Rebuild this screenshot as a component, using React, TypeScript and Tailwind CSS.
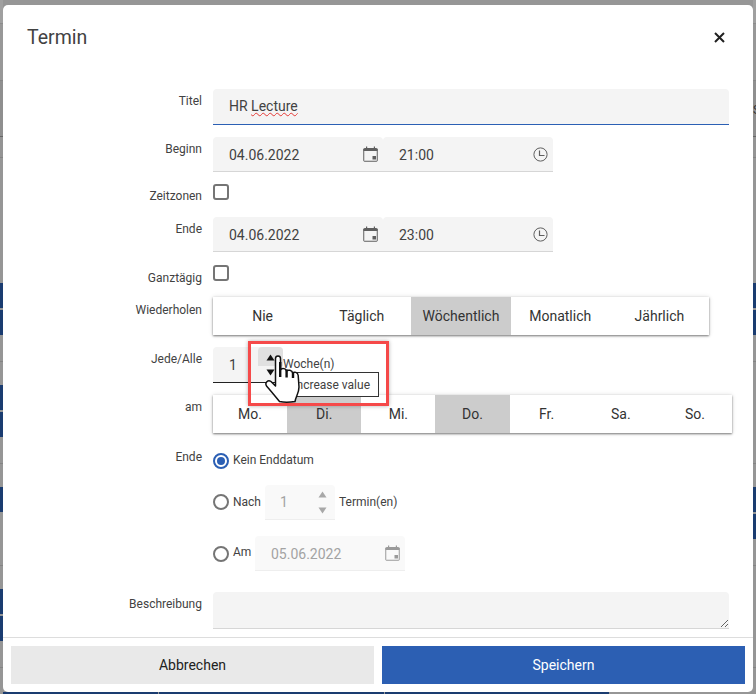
import type { ReactNode } from "react";

const FONT = "font-['Roboto',sans-serif]";

// what shows of the calendar page behind the modal
const leftBands = [
  "h-[23px] bg-[#a0a0a0]",
  "h-px bg-[#8c8c8c]",
  "h-[56px] bg-[#989898]",
  "h-px bg-[#868686]",
  "h-[55px] bg-[#8f8f8f]",
  "h-px bg-[#666666]",
  "h-[20px] bg-[#949494]",
  "h-px bg-[#848484]",
  "h-[125px] bg-[#969696]",
  "h-[25px] bg-[#1a3c70]",
  "h-[2px] bg-[#969696]",
  "h-[25px] bg-[#1a3c70]",
  "h-[26px] bg-[#969696]",
  "h-px bg-[#848484]",
  "h-[23px] bg-[#969696]",
  "h-[25px] bg-[#1a3c70]",
  "h-[2px] bg-[#969696]",
  "h-[25px] bg-[#1a3c70]",
  "h-[26px] bg-[#969696]",
  "h-px bg-[#848484]",
  "h-[23px] bg-[#969696]",
  "h-[25px] bg-[#1a3c70]",
  "h-[53px] bg-[#969696]",
  "h-px bg-[#848484]",
  "h-[23px] bg-[#969696]",
  "h-[25px] bg-[#1a3c70]",
  "h-[2px] bg-[#969696]",
  "h-[25px] bg-[#1a3c70]",
  "h-[26px] bg-[#969696]",
  "h-px bg-[#848484]",
  "h-[26px] bg-[#969696]",
];

const rightBands = [
  "h-[23px] bg-[#a0a0a0]",
  "h-px bg-[#8c8c8c]",
  "h-[56px] bg-[#989898]",
  "h-px bg-[#868686]",
  "h-[55px] bg-[#8f8f8f]",
  "h-px bg-[#666666]",
  "h-[20px] bg-[#949494]",
  "h-px bg-[#848484]",
  "h-[125px] bg-[#969696]",
  "h-[25px] bg-[#1a3c70]",
  "h-[2px] bg-[#969696]",
  "h-[25px] bg-[#1a3c70]",
  "h-[26px] bg-[#969696]",
  "h-px bg-[#848484]",
  "h-[101px] bg-[#969696]",
  "h-px bg-[#848484]",
  "h-[23px] bg-[#969696]",
  "h-[25px] bg-[#1a3c70]",
  "h-[2px] bg-[#969696]",
  "h-[25px] bg-[#1a3c70]",
  "h-[26px] bg-[#969696]",
  "h-px bg-[#848484]",
  "h-[101px] bg-[#969696]",
  "h-px bg-[#848484]",
  "h-[26px] bg-[#969696]",
];

function CalendarIcon({ className }: { className: string }) {
  return (
    <svg viewBox="0 0 15 16" className={className} fill="none" stroke="currentColor">
      <rect x="0.75" y="2.5" width="13.5" height="12.75" rx="0.5" strokeWidth="1" />
      <rect x="0.5" y="3" width="14" height="2" fill="currentColor" stroke="none" />
      <rect x="3" y="0.5" width="1.2" height="2.5" fill="currentColor" stroke="none" />
      <rect x="10.8" y="0.5" width="1.2" height="2.5" fill="currentColor" stroke="none" />
      <rect x="9.5" y="10" width="3.5" height="3.5" fill="currentColor" stroke="none" />
    </svg>
  );
}

function ClockIcon() {
  return (
    <svg viewBox="0 0 15 15" className="w-[15px] h-[15px] text-[#5f5f5f]" fill="none" stroke="currentColor">
      <circle cx="7.5" cy="7.5" r="6.6" strokeWidth="1" />
      <path d="M6.5 3.5V8.5H11.5" strokeWidth="1.2" />
    </svg>
  );
}

function Arrow({ down, className }: { down?: boolean; className: string }) {
  return (
    <svg viewBox="0 0 9 7" className={`w-[9px] h-[7px] ${className}`} fill="currentColor">
      <path d={down ? "M0.5 0.5H8.5L4.5 6.5Z" : "M4.5 0.5L8.5 6.5H0.5Z"} />
    </svg>
  );
}

function HandCursor() {
  return (
    <svg viewBox="0 0 36 50" className="w-[36px] h-[50px]">
      <path
        d="M10.5 4.5C10.5 1 15.5 1 15.5 4.5L15.5 16C16.5 14 21 14 21.5 17C23 15.5 27 16 27.8 19C29 17.5 33 18 33.2 21.5L34 33C34 39 31 42 30 47.5C24 48.5 19 48.5 14.5 47.5C10 42 5.5 36.5 1.5 32C-0.5 28.5 3 25.5 6 27.5L10.5 32Z"
        fill="#ffffff"
        stroke="#111111"
        strokeWidth="1.5"
        strokeLinejoin="round"
      />
      <path d="M15.2 8V23M21.6 15.5V23.5M28 18V24" stroke="#111111" strokeWidth="2.4" fill="none" />
    </svg>
  );
}

function Label({ children, className = "pt-[5px] leading-[14px]" }: { children: ReactNode; className?: string }) {
  return (
    <div className={`w-[199px] shrink-0 mr-[11px] text-right text-xs text-[#424242] ${className}`}>
      {children}
    </div>
  );
}

function PickerField({ value, icon, width = "w-[170px]", muted }: { value: string; icon: ReactNode; width?: string; muted?: boolean }) {
  return (
    <div
      className={`${width} h-[35px] flex items-center justify-between rounded-t-[4px] border-b pl-[16px] text-sm ${
        muted
          ? "bg-[#f9f9f9] border-[#eeeeee] text-[#a3a3a3] pr-[5px]"
          : "bg-[#f4f4f4] border-[#d6d6d6] text-[#424242] pr-[5px]"
      }`}
    >
      <span className="mt-[1px]">{value}</span>
      {icon}
    </div>
  );
}

function Checkbox() {
  return <div className="w-[16px] h-[16px] rounded-[3px] border-2 border-[#757575] bg-white" />;
}

function Radio({ checked }: { checked?: boolean }) {
  return (
    <div
      className={`w-[16px] h-[16px] shrink-0 rounded-full border-2 flex items-center justify-center ${
        checked ? "border-[#2b5fb4]" : "border-[#757575]"
      }`}
    >
      {checked && <div className="w-[8px] h-[8px] rounded-full bg-[#2b5fb4]" />}
    </div>
  );
}

function ButtonGroup({ items, active, className }: { items: string[]; active: string[]; className: string }) {
  return (
    <div className={`h-[38px] flex bg-white shadow-[0_1px_2px_rgba(0,0,0,0.5),0_0_5px_rgba(0,0,0,0.12)] ${className}`}>
      {items.map((item) => (
        <div
          key={item}
          className={`flex-1 flex items-center justify-center text-sm text-[#333333] ${
            active.includes(item) ? "bg-[#cccccc]" : ""
          }`}
        >
          {item}
        </div>
      ))}
    </div>
  );
}

function DateTimeRow({ time }: { time: string }) {
  return (
    <div className="flex">
      <PickerField value="04.06.2022" icon={<CalendarIcon className="w-[15px] h-[16px] text-[#5f5f5f]" />} />
      <PickerField value={time} icon={<ClockIcon />} />
    </div>
  );
}

export default function App() {
  return (
    <div className={`relative w-[756px] h-[694px] overflow-hidden flex bg-[#969696] ${FONT}`}>
      <div className="w-[3px] shrink-0 flex flex-col">
        {leftBands.map((band, i) => (
          <div key={i} className={`shrink-0 ${band}`} />
        ))}
      </div>
      <div className="flex-1 flex flex-col justify-end">
        <div className="flex gap-px">
          <div className="w-[155px] h-[2px] bg-[#1a3c70]" />
          <div className="w-[225px] h-[2px] bg-[#1a3c70]" />
          <div className="w-[224px] h-[2px] bg-[#1a3c70]" />
        </div>
      </div>
      <div className="w-[3px] shrink-0 flex flex-col">
        {rightBands.map((band, i) => (
          <div key={i} className={`shrink-0 ${band}`} />
        ))}
      </div>
      <div className="absolute right-0 top-[105px] w-[3px] h-[10px] overflow-hidden text-xs leading-[10px] text-[#333333]">
        S
      </div>

      {/* modal */}
      <div className="absolute left-[3px] top-[5px] w-[750px] h-[687px] flex flex-col rounded-[5px] bg-white">
        <div className="h-[84px] shrink-0 flex items-start justify-between pl-[24px] pr-[28px] pt-[21px]">
          <h1 className="text-[19.5px] leading-[24px] font-normal text-[#424242]">Termin</h1>
          <svg viewBox="0 0 11 11" className="w-[11px] h-[11px] mt-[6px]" stroke="#212121" strokeWidth="2">
            <path d="M1 1L10 10M10 1L1 10" />
          </svg>
        </div>

        <div className="flex-1 min-h-0 overflow-hidden">
          <div className="flex h-[48px]">
            <Label>Titel</Label>
            <div className="w-[516px] h-[36px] rounded-t-[4px] bg-[#f4f4f4] border-b border-[#2b5fb4] pl-[16px] pt-[7px] text-sm leading-[20px] text-[#424242]">
              HR{" "}
              <span className="underline decoration-wavy decoration-[#e53935] decoration-1 underline-offset-[1px]">
                Lecture
              </span>
            </div>
          </div>
          <div className="flex h-[47px]">
            <Label>Beginn</Label>
            <DateTimeRow time="21:00" />
          </div>
          <div className="flex h-[33px]">
            <Label>Zeitzonen</Label>
            <Checkbox />
          </div>
          <div className="flex h-[48px]">
            <Label>Ende</Label>
            <DateTimeRow time="23:00" />
          </div>
          <div className="flex h-[32px]">
            <Label className="pt-[6px] leading-[14px]">Ganztägig</Label>
            <Checkbox />
          </div>
          <div className="flex h-[50px]">
            <Label className="pt-[6px] leading-[14px]">Wiederholen</Label>
            <ButtonGroup
              className="w-[496px]"
              items={["Nie", "Täglich", "Wöchentlich", "Monatlich", "Jährlich"]}
              active={["Wöchentlich"]}
            />
          </div>
          <div className="flex h-[48px]">
            <Label>Jede/Alle</Label>
            <div className="relative flex items-start">
              <div className="w-[70px] h-[36px] flex rounded-t-[4px] bg-[#f4f4f4] border-b border-[#222222]">
                <div className="w-[45px] pl-[16px] pt-[8px] text-sm leading-[20px] text-[#424242]">1</div>
                <div className="w-[25px] flex flex-col">
                  <div className="h-[19px] rounded-t-[4px] bg-[#e0e0e0] flex items-center justify-center">
                    <Arrow className="text-[#111111] mt-[1px]" />
                  </div>
                  <div className="h-[12px] flex items-center justify-center">
                    <Arrow down className="text-[#111111]" />
                  </div>
                </div>
              </div>
              <span className="text-xs leading-[14px] text-[#424242] mt-[10px]">Woche(n)</span>

              {/* tooltip, annotation and pointer sit over the form */}
              <div className="absolute left-[67px] top-[25px] w-[99px] h-[25px] flex items-center justify-end bg-white border border-[#333333] pr-[8px] text-xs text-[#424242]">
                Increase value
              </div>
              <div className="absolute left-[35px] top-[-6px] w-[141px] h-[65px] border-[3px] border-[#f54949] shadow-[0_0_4px_rgba(0,0,0,0.3)]" />
              <div className="absolute left-[52px] top-[7px]">
                <HandCursor />
              </div>
            </div>
          </div>
          <div className="flex h-[58px]">
            <Label>am</Label>
            <ButtonGroup
              className="w-[519px]"
              items={["Mo.", "Di.", "Mi.", "Do.", "Fr.", "Sa.", "So."]}
              active={["Di.", "Do."]}
            />
          </div>
          <div className="flex h-[139px]">
            <Label className="leading-[8px]">Ende</Label>
            <div className="flex flex-col text-xs text-[#424242]">
              <div className="h-[32px] flex items-start">
                <Radio checked />
                <span className="ml-[4px] leading-[14px]">Kein Enddatum</span>
              </div>
              <div className="h-[51px] flex items-start">
                <div className="mt-[9px]">
                  <Radio />
                </div>
                <span className="ml-[4px] mt-[10px] leading-[14px] w-[32px]">Nach</span>
                <div className="w-[70px] h-[35px] flex items-center rounded-t-[4px] bg-[#f9f9f9] border-b border-[#eeeeee] pl-[15px] text-sm text-[#a3a3a3]">
                  <span className="flex-1">1</span>
                  <div className="w-[26px] flex flex-col items-center gap-[9px]">
                    <Arrow className="text-[#a8a8a8]" />
                    <Arrow down className="text-[#a8a8a8]" />
                  </div>
                </div>
                <span className="ml-[4px] mt-[10px] leading-[14px]">Termin(en)</span>
              </div>
              <div className="flex items-start">
                <div className="mt-[10px]">
                  <Radio />
                </div>
                <span className="ml-[4px] mt-[9px] leading-[14px] w-[22px]">Am</span>
                <PickerField
                  muted
                  width="w-[150px]"
                  value="05.06.2022"
                  icon={<CalendarIcon className="w-[15px] h-[16px] text-[#9a9a9a]" />}
                />
              </div>
            </div>
          </div>
          <div className="flex">
            <Label>Beschreibung</Label>
            <textarea
              readOnly
              className="block w-[516px] h-[37px] resize rounded-t-[4px] bg-[#f4f4f4] border-b border-[#d6d6d6] outline-none"
            />
          </div>
        </div>

        <div className="h-[55px] shrink-0 flex gap-[8px] border-t border-[#dddddd] px-[8px] pt-[8px]">
          <div className="flex-1 h-[38px] flex items-center justify-center bg-[#e9e9e9] text-sm text-[#212121]">
            Abbrechen
          </div>
          <div className="flex-1 h-[38px] flex items-center justify-center bg-[#2c5fb3] text-sm text-white">
            Speichern
          </div>
        </div>
      </div>
    </div>
  );
}
